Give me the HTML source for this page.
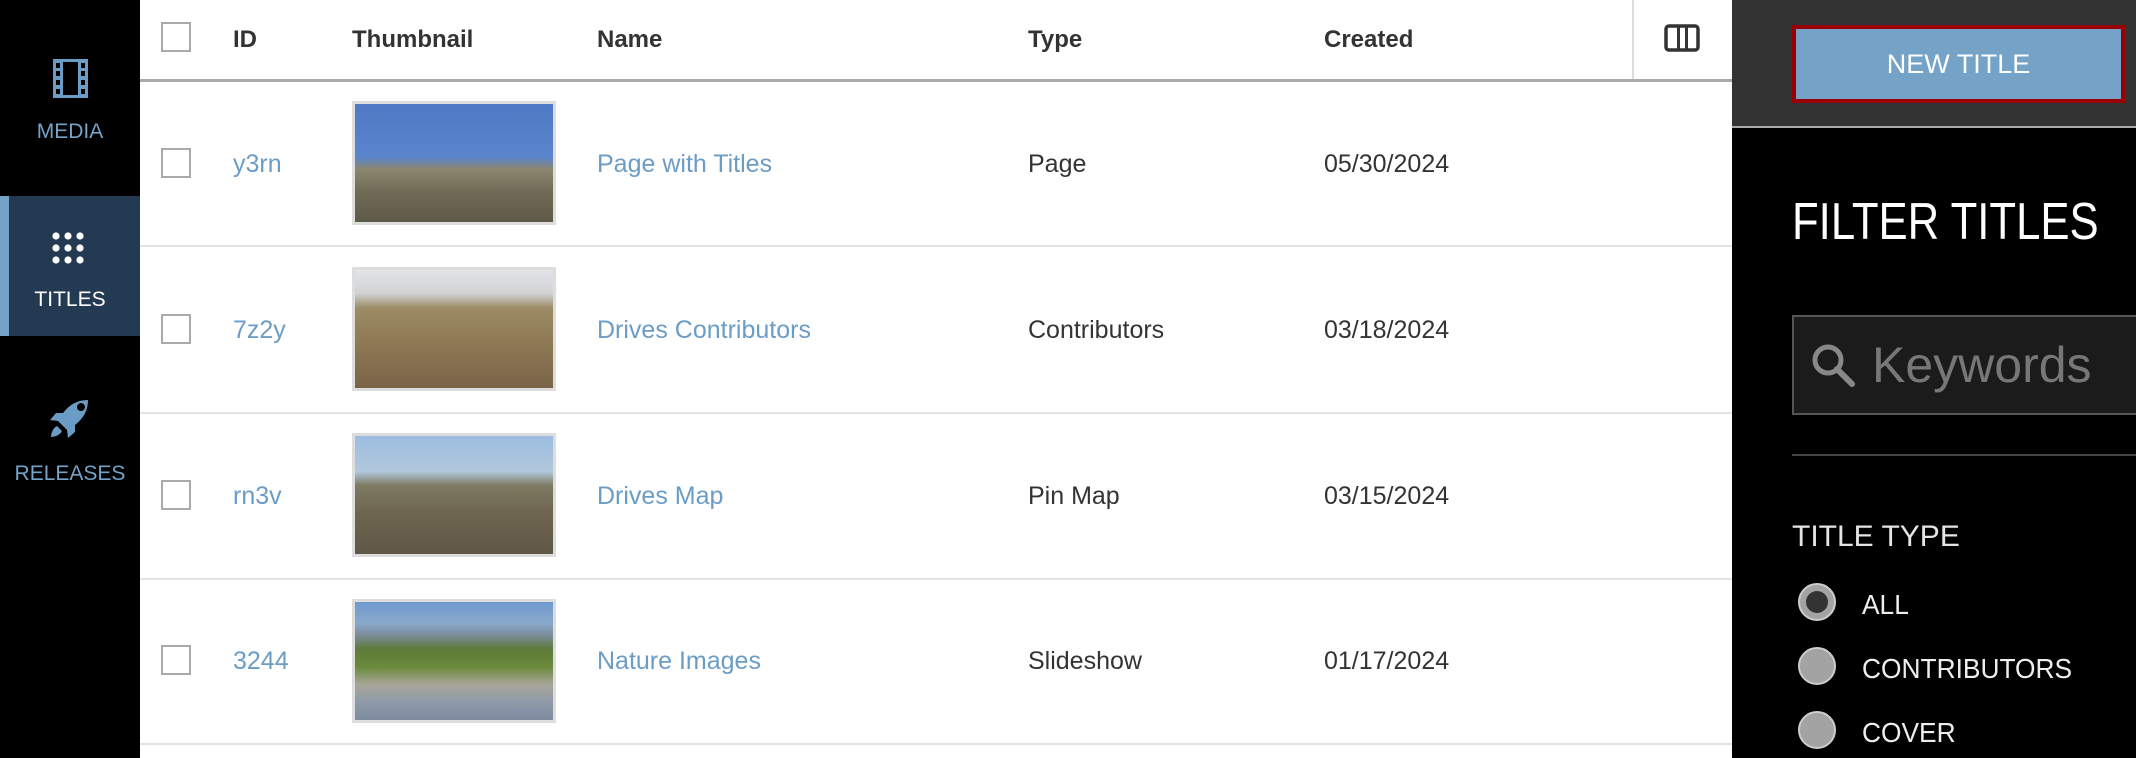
<!DOCTYPE html>
<html><head><meta charset="utf-8"><style>
*{margin:0;padding:0;box-sizing:border-box}
body{width:2136px;height:758px;overflow:hidden;background:#fff;font-family:"Liberation Sans",sans-serif;position:relative}
.abs{position:absolute}
.side{left:0;top:0;width:140px;height:758px;background:#000}
.navl{position:absolute;left:0;width:140px;text-align:center;font-size:21px;color:#75a3c8}
.hdr{font-weight:bold;font-size:24px;color:#333;top:26px}
.cb{position:absolute;left:161px;width:30px;height:30px;border:2px solid #aaa;background:#fff}
.sep{position:absolute;left:140px;width:1592px;height:2px;background:#e3e3e3}
.txt{position:absolute;font-size:25px;color:#333;white-space:nowrap}
.lnk{color:#6b9cc6}
.th{position:absolute;left:352px;width:204px;height:124px;border:3px solid #ddd}
.rp{left:1732px;top:0;width:404px;height:758px;background:#000}
.radio{position:absolute;left:1798px;width:38px;height:38px;border-radius:50%;background:#a3a3a3;border:2px solid #ccc}
.rl{position:absolute;left:1862px;font-size:28px;color:#eee;white-space:nowrap;transform:scaleX(0.94);transform-origin:left}
</style></head><body>
<div class="abs side"></div>
<svg class="abs" style="left:53px;top:59px" width="35" height="39" viewBox="0 0 35 39"><rect x="0" y="0" width="35" height="39" fill="#6b9cc6"/><rect x="10" y="3" width="15" height="33" fill="#000"/><g fill="#000"><rect x="3" y="4" width="4" height="5"/><rect x="3" y="12" width="4" height="5"/><rect x="3" y="21" width="4" height="5"/><rect x="3" y="30" width="4" height="5"/><rect x="28" y="4" width="4" height="5"/><rect x="28" y="12" width="4" height="5"/><rect x="28" y="21" width="4" height="5"/><rect x="28" y="30" width="4" height="5"/></g></svg>
<div class="navl" style="top:120px">MEDIA</div>
<div class="abs" style="left:0;top:196px;width:140px;height:140px;background:#243a52"></div>
<div class="abs" style="left:0;top:196px;width:9px;height:140px;background:#75a3c8"></div>
<svg class="abs" style="left:52px;top:232px" width="32" height="32" viewBox="0 0 32 32" fill="#fff"><circle cx="4" cy="4" r="3.6"/><circle cx="16" cy="4" r="3.6"/><circle cx="28" cy="4" r="3.6"/><circle cx="4" cy="16" r="3.6"/><circle cx="16" cy="16" r="3.6"/><circle cx="28" cy="16" r="3.6"/><circle cx="4" cy="28" r="3.6"/><circle cx="16" cy="28" r="3.6"/><circle cx="28" cy="28" r="3.6"/></svg>
<div class="navl" style="top:288px;color:#fff">TITLES</div>
<svg class="abs" style="left:48px;top:398px" width="42" height="42" viewBox="0 0 42 42" fill="#6b9cc6"><path d="M40 2C30 2 22 6 15 15L8 15 2 22 10 23 19 32 20 40 27 34 27 27C36 20 40 12 40 2ZM29 9a4 4 0 1 1 0 .1Z"/><path d="M9 28C5 30 3 35 3 39 7 39 12 37 14 33Z"/></svg>
<div class="navl" style="top:462px">RELEASES</div>

<div class="cb" style="top:22px"></div>
<div class="abs hdr" style="left:233px">ID</div>
<div class="abs hdr" style="left:352px">Thumbnail</div>
<div class="abs hdr" style="left:597px">Name</div>
<div class="abs hdr" style="left:1028px">Type</div>
<div class="abs hdr" style="left:1324px">Created</div>
<div class="abs" style="left:1632px;top:0;width:2px;height:80px;background:#ddd"></div>
<svg class="abs" style="left:1664px;top:24px" width="36" height="28" viewBox="0 0 36 28"><rect x="2" y="2" width="32" height="24" rx="3" fill="none" stroke="#333" stroke-width="3.5"/><rect x="13" y="2" width="3" height="24" fill="#333"/><rect x="21" y="2" width="3" height="24" fill="#333"/></svg>
<div class="abs" style="left:140px;top:79px;width:1592px;height:3px;background:#aaa"></div>

<div class="cb" style="top:148px"></div>
<div class="txt lnk" style="left:233px;top:150px">y3rn</div>
<div class="th" style="top:101px;background:linear-gradient(180deg,#4f79c4 0%,#5a84cc 45%,#8a8670 55%,#6f6a55 75%,#5e5a48 100%)"></div>
<div class="txt lnk" style="left:597px;top:150px">Page with Titles</div>
<div class="txt" style="left:1028px;top:150px">Page</div>
<div class="txt" style="left:1324px;top:150px">05/30/2024</div>
<div class="sep" style="top:245px"></div>

<div class="cb" style="top:314px"></div>
<div class="txt lnk" style="left:233px;top:316px">7z2y</div>
<div class="th" style="top:267px;background:linear-gradient(180deg,#e2e4e8 0%,#d0d2d4 20%,#9c8c66 32%,#8f7a55 60%,#7a6448 100%)"></div>
<div class="txt lnk" style="left:597px;top:316px">Drives Contributors</div>
<div class="txt" style="left:1028px;top:316px">Contributors</div>
<div class="txt" style="left:1324px;top:316px">03/18/2024</div>
<div class="sep" style="top:412px"></div>

<div class="cb" style="top:480px"></div>
<div class="txt lnk" style="left:233px;top:482px">rn3v</div>
<div class="th" style="top:433px;background:linear-gradient(180deg,#9bbde0 0%,#b2c8dc 30%,#7e7a62 42%,#6e6550 65%,#5f5646 100%)"></div>
<div class="txt lnk" style="left:597px;top:482px">Drives Map</div>
<div class="txt" style="left:1028px;top:482px">Pin Map</div>
<div class="txt" style="left:1324px;top:482px">03/15/2024</div>
<div class="sep" style="top:578px"></div>

<div class="cb" style="top:645px"></div>
<div class="txt lnk" style="left:233px;top:647px">3244</div>
<div class="th" style="top:599px;background:linear-gradient(180deg,#6f9ad0 0%,#8aa8cc 18%,#7a8c9a 28%,#5f7a3a 40%,#6b8a3c 55%,#a8a69a 70%,#8f9aa8 85%,#7d8aa0 100%)"></div>
<div class="txt lnk" style="left:597px;top:647px">Nature Images</div>
<div class="txt" style="left:1028px;top:647px">Slideshow</div>
<div class="txt" style="left:1324px;top:647px">01/17/2024</div>
<div class="sep" style="top:743px"></div>

<div class="abs rp"></div>
<div class="abs" style="left:1732px;top:0;width:404px;height:126px;background:#333"></div>
<div class="abs" style="left:1732px;top:126px;width:404px;height:2px;background:#aaa"></div>
<div class="abs" style="left:1792px;top:25px;width:333px;height:78px;background:#75a3c8;border:4px solid #900;color:#fff;font-size:27px;text-align:center;line-height:70px">NEW TITLE</div>
<div class="abs" style="left:1792px;top:192px;font-size:52px;color:#fff;white-space:nowrap;transform:scaleX(0.84);transform-origin:left">FILTER TITLES</div>
<div class="abs" style="left:1792px;top:315px;width:360px;height:100px;background:#1b1b1b;border:2px solid #555"></div>
<svg class="abs" style="left:1810px;top:342px" width="46" height="46" viewBox="0 0 46 46"><circle cx="18" cy="18" r="13" fill="none" stroke="#888" stroke-width="5"/><path d="M27 27L42 42" stroke="#888" stroke-width="6" stroke-linecap="round"/></svg>
<div class="abs" style="left:1872px;top:336px;font-size:50px;color:#777;white-space:nowrap">Keywords</div>
<div class="abs" style="left:1792px;top:454px;width:344px;height:2px;background:#444"></div>
<div class="abs" style="left:1792px;top:520px;font-size:30px;color:#e5e5e5">TITLE TYPE</div>
<div class="radio" style="top:583px"></div>
<div class="abs" style="left:1806px;top:591px;width:22px;height:22px;border-radius:50%;background:#333"></div>
<div class="rl" style="top:589px">ALL</div>
<div class="radio" style="top:647px"></div>
<div class="rl" style="top:653px">CONTRIBUTORS</div>
<div class="radio" style="top:711px"></div>
<div class="rl" style="top:717px">COVER</div>
</body></html>
